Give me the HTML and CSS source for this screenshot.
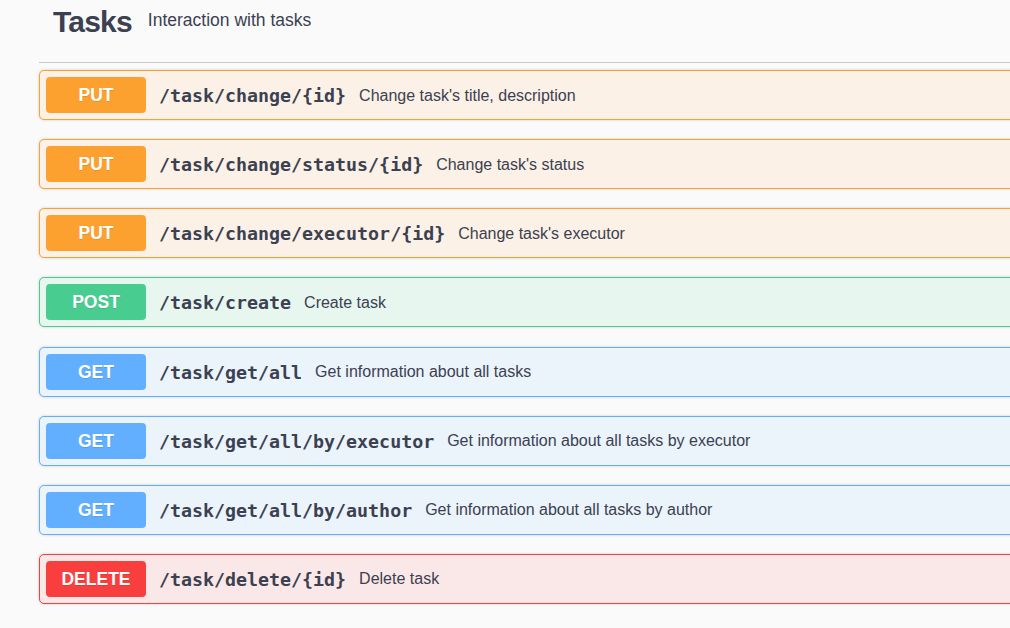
FILE: index.html
```html
<!DOCTYPE html>
<html>
<head>
<meta charset="utf-8">
<link rel="stylesheet" href="styles.css">
</head>
<body>
<div class="wrap">
  <h3 class="tag">
    <span class="tag-name">Tasks</span>
    <small class="tag-desc">Interaction with tasks</small>
  </h3>
  <div class="ops">
    <div class="op op-put"><span class="method">PUT</span><span class="path">/task/change/{id}</span><span class="desc">Change task's title, description</span></div>
    <div class="op op-put"><span class="method">PUT</span><span class="path">/task/change/status/{id}</span><span class="desc">Change task's status</span></div>
    <div class="op op-put"><span class="method">PUT</span><span class="path">/task/change/executor/{id}</span><span class="desc">Change task's executor</span></div>
    <div class="op op-post"><span class="method">POST</span><span class="path">/task/create</span><span class="desc">Create task</span></div>
    <div class="op op-get"><span class="method">GET</span><span class="path">/task/get/all</span><span class="desc">Get information about all tasks</span></div>
    <div class="op op-get"><span class="method">GET</span><span class="path">/task/get/all/by/executor</span><span class="desc">Get information about all tasks by executor</span></div>
    <div class="op op-get"><span class="method">GET</span><span class="path">/task/get/all/by/author</span><span class="desc">Get information about all tasks by author</span></div>
    <div class="op op-delete"><span class="method">DELETE</span><span class="path">/task/delete/{id}</span><span class="desc">Delete task</span></div>
  </div>
</div>
</body>
</html>
```

FILE: styles.css
```css
html, body {
  margin: 0;
  padding: 0;
  background: #fafafa;
  overflow: hidden;
  width: 1010px;
  height: 628px;
}
.wrap {
  width: 1060px;
  padding-left: 39px;
  font-family: "Liberation Sans", Arial, sans-serif;
  color: #3b4151;
}
.tag {
  margin: 0;
  display: flex;
  align-items: center;
  height: 63px;
  box-sizing: border-box;
  padding: 0 0 8px 14px;
  border-bottom: 1px solid #c8c9cc;
}
.tag-name {
  font-size: 30px;
  font-weight: bold;
  letter-spacing: -0.8px;
  line-height: 1;
  margin-top: -10px;
}
.tag-desc {
  font-size: 17.5px;
  font-weight: normal;
  margin-left: 16px;
  margin-top: -14px;
}
.ops {
  padding-top: 7px;
  display: flex;
  flex-direction: column;
  gap: 19.14px;
}
.op {
  display: flex;
  align-items: center;
  height: 50px;
  box-sizing: border-box;
  padding: 0 6px;
  border: 1px solid;
  border-radius: 5px;
  box-shadow: 0 0 3px rgba(0,0,0,.19);
}
.method {
  width: 100px;
  height: 36px;
  border-radius: 4px;
  color: #fff;
  font-weight: bold;
  font-size: 17.5px;
  display: flex;
  align-items: center;
  justify-content: center;
  padding-top: 1px;
  box-sizing: border-box;
  text-shadow: 0 1px 0 rgba(0,0,0,.1);
  flex: none;
}
.path {
  font-family: "DejaVu Sans Mono", "Liberation Mono", monospace;
  font-weight: bold;
  font-size: 18.3px;
  padding: 1px 13px 0 13px;
  color: #3b4151;
}
.desc {
  font-size: 16px;
  padding-top: 1px;
  color: #3b4151;
}
.op-put { border-color: #fca130; background: #fcf1e6; }
.op-put .method { background: #fca130; }
.op-post { border-color: #49cc90; background: #e8f6f0; }
.op-post .method { background: #49cc90; }
.op-get { border-color: #61affe; background: #ebf3fb; }
.op-get .method { background: #61affe; }
.op-delete { border-color: #f93e3e; background: #fae7e7; }
.op-delete .method { background: #f93e3e; }
```
